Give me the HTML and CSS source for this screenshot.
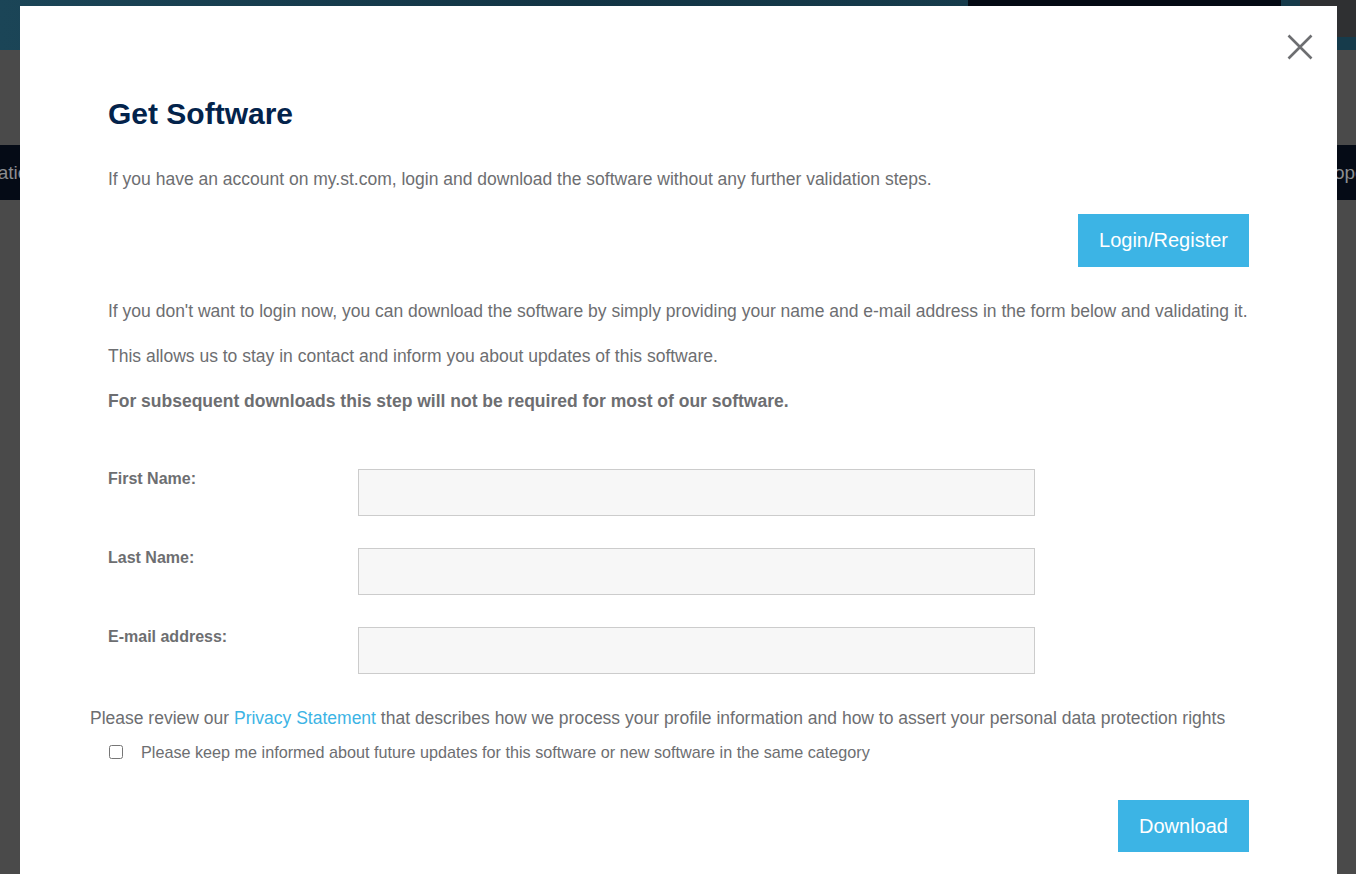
FILE: index.html
```html
<!DOCTYPE html>
<html lang="en">
<head>
<meta charset="utf-8">
<title>Get Software</title>
<link rel="stylesheet" href="styles.css">
</head>
<body>
<div class="page">
  <div class="topbar">
    <div class="tb-left"></div>
    <div class="tb-dark"></div>
    <div class="tb-teal"></div>
    <div class="tb-right"><div class="tb-right-top"></div><div class="tb-right-strip"></div></div>
  </div>
  <div class="band"></div>
  <div class="nav"><span class="nav-l">Applications</span><span class="nav-r">Developer</span></div>
  <div class="rest"></div>
</div>

<div class="modal">
  <button class="close" aria-label="Close">
    <svg width="26" height="26" viewBox="0 0 26 26"><path d="M1.5 1.5 L24.5 24.5 M24.5 1.5 L1.5 24.5" stroke="#6d6e71" stroke-width="2.6" fill="none"/></svg>
  </button>
  <h2 class="title">Get Software</h2>
  <p class="txt p1">If you have an account on my.st.com, login and download the software without any further validation steps.</p>
  <div class="btnrow"><a class="btn login">Login/Register</a></div>
  <p class="txt p2">If you don't want to login now, you can download the software by simply providing your name and e-mail address in the form below and validating it.</p>
  <p class="txt p3">This allows us to stay in contact and inform you about updates of this software.</p>
  <p class="txt p4"><strong>For subsequent downloads this step will not be required for most of our software.</strong></p>
  <form class="form">
    <label class="lbl">First Name:</label><input class="inp" type="text">
    <label class="lbl">Last Name:</label><input class="inp" type="text">
    <label class="lbl">E-mail address:</label><input class="inp" type="text">
  </form>
  <p class="txt privacy">Please review our <a class="link">Privacy Statement</a> that describes how we process your profile information and how to assert your personal data protection rights</p>
  <div class="check"><input type="checkbox" class="cb"><span class="cbtxt">Please keep me informed about future updates for this software or new software in the same category</span></div>
  <div class="btnrow dlrow"><a class="btn dl">Download</a></div>
</div>
</body>
</html>
```
FILE: styles.css
```css
html, body { margin: 0; padding: 0; }
body { width: 1356px; height: 874px; overflow: hidden; background: #4a4a4a; font-family: "Liberation Sans", Arial, sans-serif; }
.page { width: 1356px; }
.topbar { display: flex; height: 50px; }
.tb-left { width: 968px; background: linear-gradient(90deg, #1b4557 0%, #123444 60%, #163b4b 100%); }
.tb-dark { width: 313px; background: #040a14; }
.tb-teal { width: 19px; background: #163b4b; }
.tb-right { flex: 1; display: flex; flex-direction: column; }
.tb-right-top { height: 37px; background: #2f3032; }
.tb-right-strip { flex: 1; background: #163b4b; }
.band { height: 95px; background: #4a4a4a; }
.nav { height: 55px; background: #050b16; display: flex; justify-content: space-between; align-items: center; overflow: hidden; color: #8b8d90; font-size: 19px; white-space: nowrap; }
.nav-l { margin-left: -54px; }
.nav-r { margin-right: -16px; }
.rest { height: 674px; background: #4a4a4a; }

.modal { position: absolute; top: 6px; left: 20px; width: 1317px; box-sizing: border-box; padding: 91px 88px 40px; background: #fff; color: #6d6e71; }
.close { position: absolute; top: 28px; right: 24px; width: 26px; height: 26px; padding: 0; border: 0; background: none; }
.close svg { display: block; }
.title { margin: 0; font-size: 30px; line-height: 34px; font-weight: bold; color: #03234b; }
.txt { margin: 0; font-size: 17.5px; line-height: 24px; }
.p1 { margin-top: 36px; }
.btnrow { display: flex; justify-content: flex-end; }
.btn { display: block; background: #3cb4e5; color: #fff; font-size: 20px; line-height: 53px; padding: 0 21px; }
.login { margin-top: 23px; }
.p2 { margin-top: 32px; }
.p3, .p4 { margin-top: 21px; }
.p4 strong { font-weight: bold; }
.form { display: grid; grid-template-columns: 250px 677px; row-gap: 32px; margin-top: 56px; }
.lbl { font-size: 16px; line-height: 20px; font-weight: bold; }
.inp { box-sizing: border-box; height: 47px; width: 677px; margin: 0; border: 1px solid #cccccc; background: #f7f7f7; }
.privacy { margin-top: 32px; margin-left: -18px; }
.link { color: #3cb4e5; }
.check { display: flex; align-items: center; margin-top: 12px; height: 20px; }
.cb { margin: 0 18px 0 1px; width: 14px; height: 14px; }
.cbtxt { font-size: 16.2px; line-height: 20px; }
.dlrow { margin-top: 38px; }
.dl { line-height: 52px; padding: 0 21px; }
```
